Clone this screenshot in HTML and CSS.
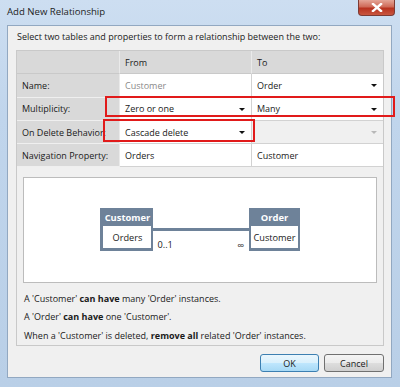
FILE: index.html
```html
<!DOCTYPE html>
<html>
<head>
<meta charset="utf-8">
<link rel="stylesheet" href="styles.css">
</head>
<body>
<div class="window">
  <div class="titlebar">
    <span class="title">Add New Relationship</span>
    <div class="close">
      <svg width="12" height="9" viewBox="0 0 12 9"><path d="M2 1 L10 8 M10 1 L2 8" stroke="#fff" stroke-width="2.4" stroke-linecap="square"/></svg>
    </div>
  </div>
  <div class="client">
    <p class="intro">Select two tables and properties to form a relationship between the two:</p>
    <div class="group">
      <div class="grid">
        <div class="cell lab hdr"></div>
        <div class="cell hdr">From</div>
        <div class="cell hdr">To</div>

        <div class="cell lab">Name:</div>
        <div class="cell val ro">Customer</div>
        <div class="cell val combo">Order<span class="arrow"></span></div>

        <div class="cell lab">Multiplicity:</div>
        <div class="cell val combo">Zero or one<span class="arrow"></span></div>
        <div class="cell val combo">Many<span class="arrow"></span></div>

        <div class="cell lab">On Delete Behavior:</div>
        <div class="cell val combo">Cascade delete<span class="arrow"></span></div>
        <div class="cell val combo disabled"><span class="arrow"></span></div>

        <div class="cell lab">Navigation Property:</div>
        <div class="cell val">Orders</div>
        <div class="cell val">Customer</div>

        <div class="mark mark-mult"></div>
        <div class="mark mark-del"></div>
      </div>
      <div class="diagram">
        <div class="entity ent-cust">
          <div class="ent-head">Customer</div>
          <div class="ent-body">Orders</div>
        </div>
        <div class="connector">
          <div class="conn-top"></div>
          <div class="conn-line"></div>
          <div class="conn-labels"><span>0..1</span><span class="inf">∞</span></div>
        </div>
        <div class="entity ent-order">
          <div class="ent-head">Order</div>
          <div class="ent-body">Customer</div>
        </div>
      </div>
      <div class="notes">
        <p>A 'Customer' <b>can have</b> many 'Order' instances.</p>
        <p>A 'Order' <b>can have</b> one 'Customer'.</p>
        <p>When a 'Customer' is deleted, <b>remove all</b> related 'Order' instances.</p>
      </div>
    </div>
    <div class="buttons">
      <div class="btn btn-ok">OK</div>
      <div class="btn">Cancel</div>
    </div>
  </div>
</div>
</body>
</html>
```
FILE: styles.css
```css
html, body {
  margin: 0;
  padding: 0;
}
body {
  width: 400px;
  height: 387px;
  overflow: hidden;
  font-family: "Open Sans", "Noto Sans", sans-serif;
  font-size: 9px;
  color: #1a1a1a;
}
.window {
  width: 400px;
  height: 387px;
  box-sizing: border-box;
  background: linear-gradient(180deg, #cddef1 0%, #c0d5ec 30%, #b9cfe7 100%);
  display: flex;
  flex-direction: column;
  padding: 0 8px 9px 7px;
}
.titlebar {
  height: 25px;
  display: flex;
  align-items: flex-start;
  justify-content: space-between;
  flex: none;
}
.title {
  font-size: 9.6px;
  color: #1e1e1e;
  margin-top: 5px;
}
.close {
  width: 37px;
  height: 16px;
  margin-right: -3px;
  box-sizing: border-box;
  border: 1px solid #7d3a33;
  border-top: none;
  border-radius: 0 0 4px 4px;
  background: linear-gradient(180deg, #e4a597 0%, #cf6a58 45%, #b8321f 55%, #c9563f 100%);
  display: flex;
  align-items: center;
  justify-content: center;
}
.client {
  flex: 1;
  background: #f0f0f0;
  border: 1px solid #92a8c1;
  display: flex;
  flex-direction: column;
  padding: 0 7px 0 8px;
}
.intro {
  margin: 5px 0 0 1px;
  height: 19px;
  line-height: 12px;
  font-size: 9px;
}
.group {
  border: 1px solid #c9c9c9;
  display: flex;
  flex-direction: column;
  height: 296px;
  box-sizing: border-box;
}
.grid {
  position: relative;
  display: grid;
  grid-template-columns: 103px 132px 1fr;
  grid-auto-rows: 23.3px;
  background: #fff;
}
.cell {
  box-sizing: border-box;
  display: flex;
  align-items: center;
  padding-left: 5px;
  border-right: 1px solid #d2d2d2;
  border-bottom: 1px solid #d2d2d2;
  font-size: 9px;
  position: relative;
}
.cell:nth-child(3n) {
  border-right: none;
}
.lab {
  background: #d9d9d9;
  border-right: 1px solid #eaeaea;
  border-bottom: 1px solid #efefef;
  white-space: nowrap;
  overflow: hidden;
}
.hdr {
  background: #d9d9d9;
  border-right: 1px solid #eaeaea;
  border-bottom: 1px solid #c9c9c9;
}
.val {
  background: #fff;
}
.ro {
  color: #8a8a8a;
}
.disabled {
  background: #f0f0f0;
}
.arrow {
  position: absolute;
  right: 6px;
  top: 50%;
  margin-top: -1px;
  width: 0;
  height: 0;
  border-left: 3.5px solid transparent;
  border-right: 3.5px solid transparent;
  border-top: 3.5px solid #111;
}
.disabled .arrow {
  border-top-color: #b8b8b8;
}
.mark {
  position: absolute;
  border: 2px solid #e11a1a;
  box-sizing: border-box;
}
.mark-mult {
  left: 88px;
  top: 45px;
  width: 290px;
  height: 21px;
}
.mark-del {
  left: 86px;
  top: 68px;
  width: 152px;
  height: 23px;
}
.diagram {
  margin: 10px 6px 0 6px;
  height: 108px;
  box-sizing: border-box;
  background: #fff;
  border: 1px solid #bcbcbc;
  display: flex;
  align-items: center;
  justify-content: center;
}
.entity {
  background: #6e8299;
  display: flex;
  flex-direction: column;
  padding: 0 2px 3px 3px;
  height: 43px;
  box-sizing: border-box;
}
.ent-order {
  padding: 0 2px 3px 2px;
}
.ent-head {
  height: 18px;
  color: #fff;
  font-weight: bold;
  font-size: 9.4px;
  display: flex;
  align-items: center;
  justify-content: center;
}
.ent-body {
  flex: 1;
  background: #fff;
  display: flex;
  align-items: center;
  justify-content: center;
  font-size: 9.2px;
  padding: 0 2px;
}
.ent-cust .ent-body {
  width: 44px;
}
.connector {
  width: 96px;
  height: 43px;
  display: grid;
  grid-template-rows: 20px 3px 1fr;
}
.conn-line {
  background: #6e8299;
}
.conn-labels {
  display: flex;
  justify-content: space-between;
  align-items: flex-end;
  padding: 0 5px 0 4px;
  font-size: 9.2px;
}
.inf {
  font-size: 10px;
  line-height: 10px;
  margin-bottom: 1px;
}
.notes {
  padding: 7px 0 0 7px;
}
.notes p {
  margin: 0;
  height: 18.5px;
  line-height: 18.5px;
  font-size: 9px;
}
.buttons {
  display: flex;
  justify-content: flex-end;
  gap: 5px;
  margin-top: 8px;
}
.btn {
  width: 60px;
  height: 18px;
  box-sizing: border-box;
  border: 1px solid #707070;
  border-radius: 3px;
  background: linear-gradient(180deg, #f4f4f4 0%, #ebebeb 48%, #dddddd 52%, #cfcfcf 100%);
  display: flex;
  align-items: center;
  justify-content: center;
  font-size: 9px;
}
.btn-ok {
  width: 59px;
  border-color: #3c7fb1;
  background: linear-gradient(180deg, #eaf6fd 0%, #d9f0fc 48%, #bee6fd 52%, #a7d9f5 100%);
}
```
